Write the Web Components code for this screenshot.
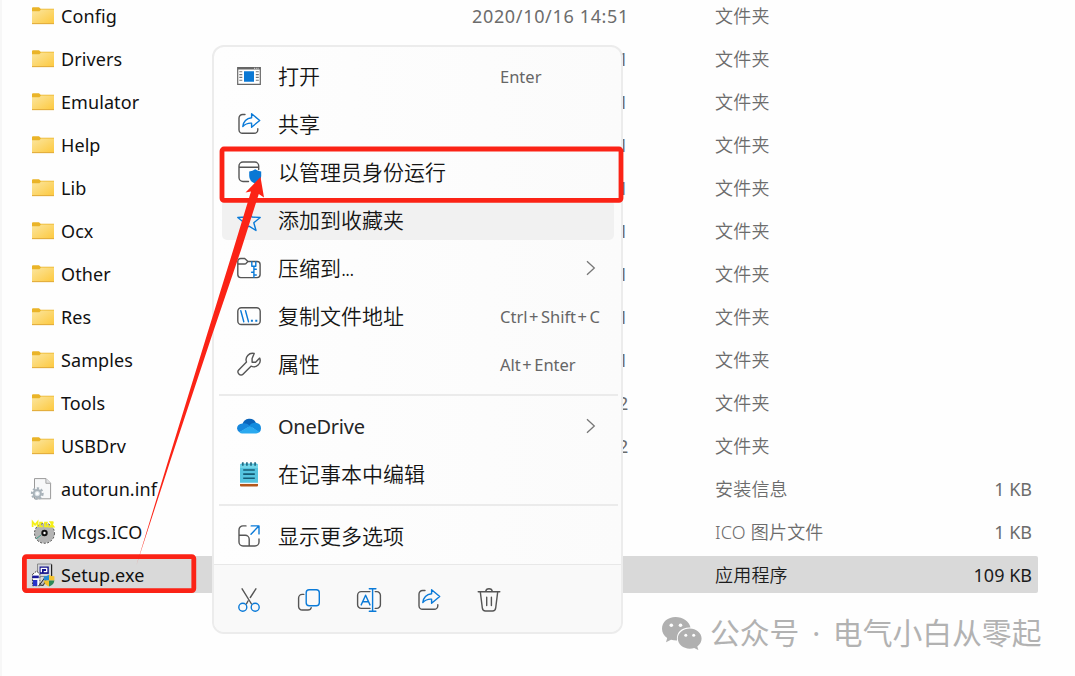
<!DOCTYPE html>
<html lang="zh-CN">
<head>
<meta charset="utf-8">
<title>Explorer</title>
<style>
  html, body {
    margin: 0;
    width: 1075px;
    height: 676px;
    overflow: hidden;
    background: #fefefe;
    font-family: "Noto Sans", "Noto Sans CJK SC", sans-serif;
  }
</style>
</head>
<body>
<file-explorer></file-explorer>

<script>
const ICONS = {
  folder: `<defs><linearGradient id="f" x1="0" y1="0" x2="1" y2="1"><stop offset="0" stop-color="#fbe6a0"/><stop offset="1" stop-color="#fdc93f"/></linearGradient></defs>
    <path d="M1 4.2q0-1 1-1h6l1.6 1.6H23V10H1z" fill="#eab428"/>
    <path d="M1 7.2h7.4l1.7-1.7H23v13.9H1z" fill="url(#f)"/><path d="M1 19.6h22" stroke="#e3ac38" stroke-width="1.1"/>`,
  inf: `<path d="M3.500 1.600h11.500l4.600 4.600v15.600H3.500z" fill="#f7f8f9" stroke="#9a9a9a"/><path d="M14.900 1.600v4.700h4.700" fill="#e2e4e6" stroke="#a5a5a5"/>
    <circle cx="6.300" cy="16.600" r="5.200" fill="none" stroke="#a9b3ba" stroke-width="2.400" stroke-dasharray="2.200 1.700"/>
    <circle cx="6.300" cy="16.600" r="3.600" fill="#dde4e8" stroke="#a9b3ba" stroke-width="2"/><circle cx="6.300" cy="16.600" r="1.500" fill="#fff"/>`,
  cd: `<circle cx="13.5" cy="13.300" r="10" fill="#b4b4b4" stroke="#444" stroke-dasharray="2 1.6"/>
    <path d="M5 19l5-4" stroke="#3f9c88"/><circle cx="13.5" cy="13" r="3.2" fill="#111"/><circle cx="13.5" cy="13" r="1.2" fill="#fff"/>
    <path d="M1.600 7V1.800l2.500 3 2.500-3V7M11.800 2.600H9v3.800h2.800M16.800 2.600H14v3.800h2.800V4.800H16M22.400 2.200h-3l3.200 4.400h-3.600l3.400-4.400" fill="none" stroke="#f5ef18" stroke-width="1.700"/>`,
  setup: `<path d="M6.500 1h14v12.500h-14z" fill="#d3d5da" stroke="#777" stroke-width=".8"/><path d="M20.600 1.500V13" stroke="#222" stroke-width="1.200"/>
    <path d="M8.600 3.500h9.200v7.400H8.600z" fill="#12128c"/><path d="M10.300 9.200V5.400h5.400v3.200h-3" fill="none" stroke="#fff" stroke-width="1.400"/>
    <path d="M1.500 11.400l4-3.200 3.400 2.800v11.700H1.500z" fill="#fff" stroke="#444" stroke-dasharray="2 1"/><path d="M1.400 12.600h6.400v2.600H1.400z" fill="#18189b"/><path d="M1.900 17h4.400v6H1.900z" fill="#2732c9"/>
    <path d="M8.500 22l5-7 2 1-3.200 6.400z" fill="#bbb" stroke="#222"/>
    <path d="M12.800 13.300q3 0 5.200-1.500v5.800h-5.200z" fill="#288bd1"/><path d="M18 11.800q2.200 1.500 5.400 1.500v4.300H18z" fill="#f4c430"/>
    <path d="M12.800 17.600H18v6q-4.600-1.600-5.200-6z" fill="#f2c22d"/><path d="M18 17.600h5.400q-.6 4.400-5.400 6z" fill="#2c8958"/>`,
  open: `<path d="M.7 3.7h22.6v16.6H.7z" fill="#fff" stroke="#666" stroke-width="1.2"/><path d="M.7 4.3h22.6" stroke="#666" stroke-width="2.2"/><path d="M17 4.3h4.6" stroke="#ddd" stroke-width="1" stroke-dasharray="1 .8"/>
    <path d="M2.3 7.8h3M2.3 10.6h3M2.3 13.4h3M2.3 16.2h3M18.8 7.8h3M18.8 10.6h3M18.8 13.4h3M18.8 16.2h3" stroke="#777" stroke-width="1.1"/>
    <path d="M7 7.2h10v10.5H7z" fill="#0a78d4"/>`,
  share: `<path class="g" d="M8 2.500H5.600a3.600 3.600 0 0 0-3.600 3.600v11.600a3.600 3.600 0 0 0 3.600 3.600h11.600a3.600 3.600 0 0 0 3.600-3.600v-1"/>
    <path class="b" d="M14.600 1.700l8.100 6.800-8.100 6.700v-4q-5.200-.4-8.800 3.400Q6.700 6.700 14.600 5.700z"/>`,
  admin: `<path class="g" d="M11.500 21.500H6A4 4 0 0 1 2 17.500V6a4 4 0 0 1 4-4h11.700a4 4 0 0 1 4 4v3.500M2 7.200h19.700"/>
    <path d="M18.200 9.300q2.500 2.100 6 2.200v4.500q0 5.200-6 7.800-6-2.600-6-7.800v-4.500q3.500-.1 6-2.200z" fill="#0a78d4"/>`,
  star: `<path class="b" d="M12 1.800l2.900 7.200 8.300.5-6.400 5.200 2.200 7.800L12 18.200l-7 4.300 2.200-7.800L.8 9.500 9.100 9z"/>`,
  zip: `<path class="g" d="M.8 18.600V5.400A2.900 2.900 0 0 1 3.700 2.500h4l3.300 3h9.100a3 3 0 0 1 3 3v10.100a3 3 0 0 1-3 3H3.700a3 3 0 0 1-2.900-3zM.8 8h6.600q1.400 0 2-.9l1.600-1.600"/>
    <path class="b" d="M14.800 5.700v4.500h4V5.700M16.900 10.200v11M17 13.300h2.300M14.600 16.200H17M17 19h2.300"/>`,
  path: `<rect class="g" x=".8" y="3.700" width="22.400" height="16.800" rx="3.600"/><path class="b" d="M3.800 6.700l3 11M8.500 6.700l3 11"/>
    <path d="M13.900 15.800h2v2h-2zM18.300 15.800h2v2h-2z" fill="#0a78d4"/>`,
  wrench: `<path class="g" d="M17.200 1.500a6.500 6.500 0 0 0-7.700 8.600L1.700 17.900a2.700 2.700 0 0 0 0 3.900l.4.400a2.700 2.700 0 0 0 3.900 0l8-8a6.400 6.400 0 0 0 8.700-8.100l-4.100 4.100h-3.500V6.600z"/>`,
  onedrive: `<path d="M5.500 10.300A7.200 7.200 0 0 1 19 8.900L14 15 5.500 10.300z" fill="#0a64ba"/>
    <path d="M5.600 9.500q4.300-1.300 7.500 2.700L2.700 18.200A4.700 4.700 0 0 1 0 14.500Q.2 10 5.600 9.500z" fill="#1787dc"/>
    <path d="M12.200 11.600q2.500-3.500 6.900-2.800 4.900.8 4.900 5.600 0 2.600-2 4z" fill="#138cdf"/>
    <path d="M2.300 17.900l10.600-6 9.500 6.100q-1.200 1.400-3.300 1.400H5.300q-1.900 0-3-1.500z" fill="#2aa9ef"/>`,
  notepad: `<path d="M3 20h18v3.500q0 1-1 1H4q-1 0-1-1z" fill="#b4571b"/><path d="M3 20h18v2H3z" fill="#f5f5f5"/>
    <path d="M3 3q0-1.500 1.500-1.500h15Q21 1.500 21 3v17.800H3z" fill="#55c4df"/><path d="M3 3h18v3H3z" fill="#73d6e9"/>
    <path d="M5.800.3v3.400M9.900.3v3.400M14 .3v3.400M18.100.3v3.400" stroke="#216b83" stroke-width="1.700"/>
    <path d="M6.200 8h11.600M6.200 12.100h11.600M6.200 16.200h11.600" stroke="#155c76" stroke-width="1.600"/>`,
  more: `<path class="g" d="M9 1.900H6A4 4 0 0 0 2 5.900V18a4 4 0 0 0 4 4h12a4 4 0 0 0 4-4v-3M2 11.300h6.200a4 4 0 0 1 4 4V22"/>
    <path class="b" d="M14.200 1.900H22v8M21.600 2.300L14 10.200"/>`,
  cut: `<path class="g" d="M5.100.8l9.400 15.200M18.900.8L13.300 9.500M11 13l-1.600 3"/><circle class="b" cx="5.800" cy="19.300" r="4"/><circle class="b" cx="18.200" cy="19.300" r="4"/>`,
  copy: `<path class="g" d="M6.800 6.400H5.200A3.600 3.600 0 0 0 1.600 10v8.400A3.600 3.600 0 0 0 5.200 22h5.700q2.800 0 3.300-2.400"/><rect class="b" x="9.200" y="1.800" width="13.100" height="15.900" rx="3"/>`,
  rename: `<path class="g" d="M13 3.600H4.200A3.600 3.600 0 0 0 .6 7.200v9.600a3.600 3.600 0 0 0 3.600 3.600H13M18.200 3.600h1.600a3.600 3.600 0 0 1 3.600 3.600v9.600a3.600 3.600 0 0 1-3.600 3.600h-1.600"/>
    <path class="b" d="M4.200 16.900L8.600 7.200l4.400 9.700M5.700 13.700h5.800M12.300.8h6.600M12.300 23.200h6.600M15.600.8v22.400"/>`,
  trash: `<path class="g" d="M1.200 3.800h21.600M8.700 3.500q.3-2.800 3.300-2.800t3.300 2.800M3.300 3.900l2 15.900q.4 3.200 3.200 3.200h7q2.800 0 3.200-3.200l2-15.900M9.700 9.300v8.200M14.400 9.300v8.200"/>`,
  chevron: `<path d="M8 5.200l7.300 6.800L8 18.800" fill="none" stroke="#777" stroke-width="1.300"/>`
};

class UiIcon extends HTMLElement {
  connectedCallback() {
    this.attachShadow({ mode: 'open' }).innerHTML = `
      <style>
        :host { display: block; width: 24px; height: 24px; flex: none; }
        svg { display: block; overflow: visible; }
        .g, .b { fill: none; stroke: #555; stroke-width: 1.4; stroke-linejoin: round; stroke-linecap: round; }
        .b { stroke: #0a7ad8; }
      </style>
      <svg width="24" height="24" viewBox="0 0 24 24">${ICONS[this.getAttribute('name')]}</svg>`;
  }
}

class FileRow extends HTMLElement {
  connectedCallback() {
    const get = name => this.getAttribute(name) || '';
    this.attachShadow({ mode: 'open' }).innerHTML = `
      <style>
        :host {
          display: grid;
          grid-template-columns: 448px 157px 86px 1fr 90px;
          align-items: center;
          height: 37px;
          margin: 3px 37px 3px 24px;
          padding-right: 6px;
          border-radius: 2px;
          font-size: 18px;
          line-height: 26px;
          color: #6c6c6c;
          white-space: nowrap;
        }
        :host([selected]) { background: #d9d9d9; color: #1c1c1c; }
        .name { display: flex; align-items: center; gap: 6px; padding-left: 7px; color: #111; letter-spacing: .08px; }
        .date { text-align: right; letter-spacing: .66px; }
        .type { grid-column: 4; font-weight: 350; letter-spacing: .2px; }
        .size { text-align: right; }
      </style>
      <span class="name"><ui-icon name="${get('icon')}"></ui-icon><slot></slot></span>
      <span class="date">${get('date')}</span>
      <span class="type">${get('type')}</span>
      <span class="size">${get('size')}</span>`;
  }
}

class MenuItem extends HTMLElement {
  connectedCallback() {
    const key = this.getAttribute('key');
    this.attachShadow({ mode: 'open' }).innerHTML = `
      <style>
        :host {
          display: flex;
          align-items: center;
          height: 40px;
          margin: 4px 7px 4px 8px;
          padding-left: 15px;
          border-radius: 5px;
          font-size: 21px;
          line-height: 30px;
          color: #151515;
          white-space: nowrap;
        }
        :host([hover]) { background: #f1f1f1; }
        .label { width: 222px; margin-left: 17px; font-weight: 350; }
        .latin { font-size: 20px; letter-spacing: -.25px; font-weight: 400; color: #262626; padding-top: 1px; }
        .key { font-size: 16.5px; color: #666; padding-top: 1px; }
        .plus { letter-spacing: 2.5px; margin-left: 1.5px; }
        .arrow { margin-left: 79px; }
      </style>
      <ui-icon name="${this.getAttribute('icon')}"></ui-icon>
      <span class="label ${this.hasAttribute('latin') ? 'latin' : ''}"><slot></slot></span>
      ${key ? `<span class="key">${key.replaceAll('+', '<span class="plus">+</span>')}</span>` : ''}
      ${this.hasAttribute('submenu') ? '<ui-icon class="arrow" name="chevron"></ui-icon>' : ''}`;
  }
}

class MenuLine extends HTMLElement {
  connectedCallback() {
    this.attachShadow({ mode: 'open' }).innerHTML = `
      <style>
        :host { display: block; height: 2px; margin: 6px 3px 6px 5px; background: #ebebeb; }
      </style>`;
  }
}

class ContextMenu extends HTMLElement {
  connectedCallback() {
    this.attachShadow({ mode: 'open' }).innerHTML = `
      <style>
        :host {
          display: flex;
          flex-direction: column;
          box-sizing: border-box;
          width: 411px;
          height: 589px;
          border: 2px solid #ececec;
          border-radius: 12px;
          background: linear-gradient(90deg, #fefefe, #fbfbfb);
          overflow: hidden;
        }
        .items { display: flex; flex-direction: column; height: 517px; padding-top: 5px; box-sizing: border-box; }
        .tools {
          flex: 1;
          display: flex;
          align-items: center;
          gap: 36px;
          padding: 2px 0 0 23px;
          border-top: 1px solid #e8e8e8;
          background: #f9f9f9;
        }
      </style>
      <div class="items"><slot></slot></div>
      <div class="tools">
        ${['cut', 'copy', 'rename', 'share', 'trash'].map(n => `<ui-icon name="${n}"></ui-icon>`).join('')}
      </div>`;
  }
}

class RedMarks extends HTMLElement {
  connectedCallback() {
    this.attachShadow({ mode: 'open' }).innerHTML = `
      <style>
        :host { display: block; pointer-events: none; }
        svg { display: block; }
      </style>
      <svg width="1075" height="676" viewBox="0 0 1075 676">
        <g fill="none" stroke="#fb2316" stroke-width="4.8">
          <rect x="222" y="149" width="399" height="51.3" rx="2"/>
          <rect x="24.4" y="556.6" width="169.4" height="34" rx="2"/>
        </g>
        <path d="M136.5 565L168.4 460 207.5 333 233.2 250 251 191.5 245.5 192.5 260.5 177 264 197.500 258.800 194 241 250 212.800 333 170.600 460z" fill="#fb2316"/>
      </svg>`;
  }
}

class WeChatMark extends HTMLElement {
  connectedCallback() {
    this.attachShadow({ mode: 'open' }).innerHTML = `
      <style>
        :host { display: flex; align-items: center; gap: 8px; font-size: 29.8px; line-height: 40px; word-spacing: 5px; color: #b2b2b2; white-space: nowrap; }
        svg { display: block; flex: none; }
      </style>
      <svg width="41" height="34" viewBox="0 0 41 34">
        <path d="M14.5 1C6.8 1 1 6 1 12.7c0 4 2 7.1 5.2 9.3L5 26.3l5-2.500q2.500.7 6 .7C15 16 21 11 29.500 11.500 28.200 5.200 22 1 14.500 1z" fill="#b0b0b0"/>
        <path d="M28.700 12.500c-6.500 0-11.900 4.400-11.900 10.100s5.400 10.100 11.900 10.100q2.500 0 4.500-.6l4.200 2-1.100-3.600c2.700-1.900 4.300-4.700 4.300-7.900 0-5.700-5.400-10.100-11.900-10.100z" fill="#b0b0b0"/>
        <g fill="#fefefe"><circle cx="10.300" cy="9.300" r="1.800"/><circle cx="19.500" cy="9.300" r="1.800"/><circle cx="24.800" cy="19.200" r="1.500"/><circle cx="32.700" cy="19.200" r="1.500"/></g>
      </svg>
      <span><slot></slot></span>`;
  }
}

class FileExplorer extends HTMLElement {
  connectedCallback() {
    const folders = ['Config', 'Drivers', 'Emulator', 'Help', 'Lib', 'Ocx', 'Other', 'Res', 'Samples', 'Tools', 'USBDrv'];
    // below the first row only the end of the date sticks out from under the menu
    const date = i => i === 0 ? '2020/10/16 14:51' : i > 8 ? '2' : '1';
    this.attachShadow({ mode: 'open' }).innerHTML = `
      <style>
        :host { display: block; position: relative; width: 1075px; height: 676px; overflow: hidden; }
        .list { display: flex; flex-direction: column; height: 682px; box-sizing: border-box; margin-top: -6px; border-left: 2px solid #f7f7f7; }
        file-row { margin-left: 22px; }
        context-menu { position: absolute; left: 212px; top: 45px; }
        red-marks { position: absolute; left: 0; top: 0; }
        wechat-mark { position: absolute; left: 661px; top: 613px; }
        .dots { letter-spacing: -1px; }
      </style>
      <div class="list">
        ${folders.map((name, i) => `<file-row icon="folder" date="${date(i)}" type="文件夹">${name}</file-row>`).join('')}
        <file-row icon="inf" type="安装信息" size="1 KB">autorun.inf</file-row>
        <file-row icon="cd" type="ICO 图片文件" size="1 KB">Mcgs.ICO</file-row>
        <file-row icon="setup" type="应用程序" size="109 KB" selected>Setup.exe</file-row>
      </div>
      <context-menu>
        <menu-item icon="open" key="Enter">打开</menu-item>
        <menu-item icon="share">共享</menu-item>
        <menu-item icon="admin">以管理员身份运行</menu-item>
        <menu-item icon="star" hover>添加到收藏夹</menu-item>
        <menu-item icon="zip" submenu>压缩到<span class="dots">...</span></menu-item>
        <menu-item icon="path" key="Ctrl+Shift+C">复制文件地址</menu-item>
        <menu-item icon="wrench" key="Alt+Enter">属性</menu-item>
        <menu-line></menu-line>
        <menu-item icon="onedrive" latin submenu>OneDrive</menu-item>
        <menu-item icon="notepad">在记事本中编辑</menu-item>
        <menu-line></menu-line>
        <menu-item icon="more">显示更多选项</menu-item>
      </context-menu>
      <red-marks></red-marks>
      <wechat-mark>公众号 · 电气小白从零起</wechat-mark>`;
  }
}

customElements.define('ui-icon', UiIcon);
customElements.define('file-row', FileRow);
customElements.define('menu-item', MenuItem);
customElements.define('menu-line', MenuLine);
customElements.define('context-menu', ContextMenu);
customElements.define('red-marks', RedMarks);
customElements.define('wechat-mark', WeChatMark);
customElements.define('file-explorer', FileExplorer);
</script>
</body>
</html>
